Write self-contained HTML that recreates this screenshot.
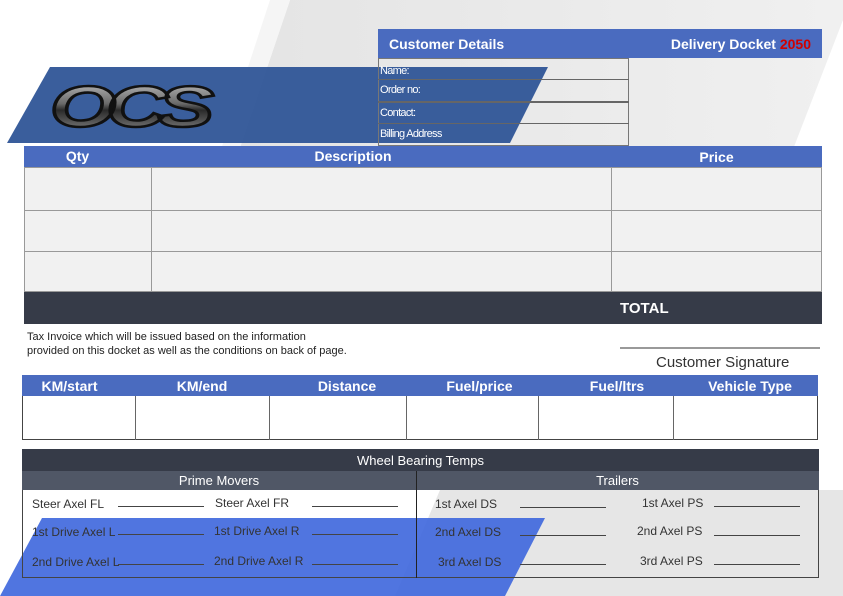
<!DOCTYPE html>
<html><head><style>
body{margin:0;width:843px;height:596px;position:relative;overflow:hidden;background:#fff;font-family:"Liberation Sans",sans-serif;}
.a{position:absolute;box-sizing:border-box;}
.hd{background:#4a6bbf;color:#fff;font-weight:bold;font-size:14px;}
.c{text-align:center;}
.lbl{font-size:12px;color:#333;position:absolute;z-index:5;}
.ln{position:absolute;height:1px;background:#444;z-index:5;}
</style></head><body>
<svg class="a" style="left:0;top:0" width="843" height="596">
<defs><linearGradient id="g" x1="0" y1="0" x2="1" y2="0"><stop offset="0" stop-color="#e4e4e4"/><stop offset="1" stop-color="#f0f0f0"/></linearGradient></defs>
<polygon points="290,0 843,0 843,20 780,183 228,183" fill="url(#g)"/>
<polygon points="270,0 290,0 228,183 210,183" fill="#f5f5f5"/>
<polygon points="50,67 548,67 510,143 7,143" fill="#2f5597" opacity="0.95"/>
</svg>
<!-- customer -->
<div class="a hd" style="left:378px;top:29px;width:444px;height:29px;padding:7px 11px;font-size:14px">Customer Details<span style="float:right">Delivery Docket <span style="color:#d00000">2050</span></span></div>
<div class="a" style="left:378px;top:58px;width:251px;height:88px;border:1px solid #777;"></div>
<div class="a" style="left:378px;top:79px;width:251px;height:1px;background:#666"></div>
<div class="a" style="left:378px;top:101px;width:251px;height:2px;background:#666"></div>
<div class="a" style="left:378px;top:123px;width:251px;height:1px;background:#666"></div>
<div class="a" style="left:380px;top:65px;font-size:11px;color:#fff;letter-spacing:-0.7px">Name:</div>
<div class="a" style="left:380px;top:84px;font-size:11px;color:#fff;letter-spacing:-0.7px">Order no:</div>
<div class="a" style="left:380px;top:107px;font-size:11px;color:#fff;letter-spacing:-0.7px">Contact:</div>
<div class="a" style="left:380px;top:128px;font-size:11px;color:#fff;letter-spacing:-0.7px">Billing Address</div>
<!-- logo -->
<svg class="a" style="left:40px;top:72px" width="200" height="66">
<defs><linearGradient id="m" x1="0" y1="0" x2="0" y2="1"><stop offset="0" stop-color="#cfcfcf"/><stop offset="0.45" stop-color="#6a6a6a"/><stop offset="0.55" stop-color="#2a2a2a"/><stop offset="1" stop-color="#9a9a9a"/></linearGradient></defs>
<text x="8" y="56" font-family="Liberation Sans" font-weight="bold" font-style="italic" font-size="68" fill="url(#m)" stroke="#111" stroke-width="3" letter-spacing="-8" transform="scale(1.25,0.85) translate(0,8)">OCS</text>
</svg>
<!-- qty table -->
<div class="a hd" style="left:24px;top:146px;width:798px;height:21px"></div>
<div class="a hd c" style="left:14px;top:148px;width:127px;background:none">Qty</div>
<div class="a hd c" style="left:151px;top:148px;width:404px;background:none">Description</div>
<div class="a hd c" style="left:611px;top:149px;width:211px;background:none">Price</div>
<div class="a" style="left:24px;top:167px;width:798px;height:125px;background:#f1f1f1;border:1px solid #999"></div>
<div class="a" style="left:151px;top:167px;width:1px;height:125px;background:#999"></div>
<div class="a" style="left:611px;top:167px;width:1px;height:125px;background:#999"></div>
<div class="a" style="left:24px;top:210px;width:798px;height:1px;background:#999"></div>
<div class="a" style="left:24px;top:251px;width:798px;height:1px;background:#999"></div>
<div class="a" style="left:24px;top:292px;width:798px;height:32px;background:#363b48;color:#fff;font-weight:bold;font-size:15px;padding:8px 0 0 596px">TOTAL</div>
<div class="a" style="left:27px;top:330px;font-size:11px;line-height:14px;color:#222">Tax Invoice which will be issued based on the information<br>provided on this docket as well as the conditions on back of page.</div>
<div class="a" style="left:620px;top:347px;width:200px;height:2px;background:#999"></div>
<div class="a" style="left:656px;top:354px;font-size:15px;color:#333">Customer Signature</div>
<!-- km -->
<div class="a hd" style="left:22px;top:375px;width:796px;height:21px"></div>
<div class="a" style="left:22px;top:396px;width:796px;height:44px;border:1px solid #444;border-top:none"></div>
<div style="position:absolute;left:22px;top:378px;width:796px;display:flex;color:#fff;font-weight:bold;font-size:14px">
<div class="c" style="width:95px">KM/start</div><div class="c" style="width:170px">KM/end</div><div class="c" style="width:120px">Distance</div><div class="c" style="width:145px">Fuel/price</div><div class="c" style="width:130px">Fuel/ltrs</div><div class="c" style="width:136px">Vehicle Type</div></div>
<div class="a" style="left:135px;top:396px;width:1px;height:44px;background:#666"></div>
<div class="a" style="left:269px;top:396px;width:1px;height:44px;background:#666"></div>
<div class="a" style="left:406px;top:396px;width:1px;height:44px;background:#666"></div>
<div class="a" style="left:538px;top:396px;width:1px;height:44px;background:#666"></div>
<div class="a" style="left:673px;top:396px;width:1px;height:44px;background:#666"></div>
<!-- wheel -->
<div class="a" style="left:22px;top:449px;width:797px;height:22px;background:#363b48;color:#fff;font-size:13px;text-align:center;padding-top:4px">Wheel Bearing Temps</div>
<div class="a" style="left:22px;top:471px;width:797px;height:19px;background:#505766"></div>
<div class="a c" style="left:22px;top:473px;width:394px;color:#fff;font-size:13px">Prime Movers</div>
<div class="a c" style="left:416px;top:473px;width:403px;color:#fff;font-size:13px">Trailers</div>
<div class="a" style="left:22px;top:490px;width:797px;height:88px;border:1px solid #444;border-top:none;z-index:3"></div>
<div class="a" style="left:0;top:490px;width:843px;height:106px;background:#e6e6e6;z-index:1;clip-path:polygon(440px 0,843px 0,843px 106px,395px 106px)"></div>
<div class="a" style="left:0;top:518px;width:545px;height:78px;background:#4169dd;opacity:0.92;z-index:2;clip-path:polygon(42px 0,545px 0,505px 78px,0 78px)"></div>
<div class="a" style="left:416px;top:471px;width:1px;height:107px;background:#222;z-index:4"></div>
<div class="lbl" style="left:32px;top:497px">Steer Axel FL</div><div class="ln" style="left:118px;top:506px;width:86px"></div>
<div class="lbl" style="left:215px;top:496px">Steer Axel FR</div><div class="ln" style="left:312px;top:506px;width:86px"></div>
<div class="lbl" style="left:32px;top:525px">1st Drive Axel L</div><div class="ln" style="left:118px;top:534px;width:86px"></div>
<div class="lbl" style="left:214px;top:524px">1st Drive Axel R</div><div class="ln" style="left:312px;top:534px;width:86px"></div>
<div class="lbl" style="left:32px;top:555px">2nd Drive Axel L</div><div class="ln" style="left:118px;top:564px;width:86px"></div>
<div class="lbl" style="left:214px;top:554px">2nd Drive Axel R</div><div class="ln" style="left:312px;top:564px;width:86px"></div>
<div class="lbl" style="left:435px;top:497px">1st Axel DS</div><div class="ln" style="left:520px;top:507px;width:86px"></div>
<div class="lbl" style="left:642px;top:496px">1st Axel PS</div><div class="ln" style="left:714px;top:506px;width:86px"></div>
<div class="lbl" style="left:435px;top:525px">2nd Axel DS</div><div class="ln" style="left:520px;top:535px;width:86px"></div>
<div class="lbl" style="left:637px;top:524px">2nd Axel PS</div><div class="ln" style="left:714px;top:535px;width:86px"></div>
<div class="lbl" style="left:438px;top:555px">3rd Axel DS</div><div class="ln" style="left:520px;top:564px;width:86px"></div>
<div class="lbl" style="left:640px;top:554px">3rd Axel PS</div><div class="ln" style="left:714px;top:564px;width:86px"></div>
</body></html>
